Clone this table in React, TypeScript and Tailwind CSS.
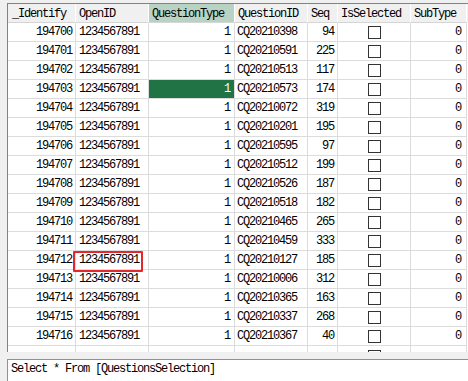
import React from 'react';

const rows: [number, string, number][] = [
    [194700, 'CQ20210398', 94],
    [194701, 'CQ20210591', 225],
    [194702, 'CQ20210513', 117],
    [194703, 'CQ20210573', 174],
    [194704, 'CQ20210072', 319],
    [194705, 'CQ20210201', 195],
    [194706, 'CQ20210595', 97],
    [194707, 'CQ20210512', 199],
    [194708, 'CQ20210526', 187],
    [194709, 'CQ20210518', 182],
    [194710, 'CQ20210465', 265],
    [194711, 'CQ20210459', 333],
    [194712, 'CQ20210127', 185],
    [194713, 'CQ20210006', 312],
    [194714, 'CQ20210365', 163],
    [194715, 'CQ20210337', 268],
    [194716, 'CQ20210367', 40],
];

const cols = 'grid grid-cols-[68px_73px_86px_73px_30px_73px_56px]';
const cell = 'flex items-center h-[19px] border-r border-b border-[#dcdcdc] overflow-hidden whitespace-nowrap';
const head = 'flex items-center h-[19px] border-r border-r-white border-b border-b-[#d5d5d5] pl-[3px] pt-[2px] whitespace-nowrap';

function CheckBox() {
    return <div className="w-[13px] h-[13px] border border-[#333333] bg-white" />;
}

export default function App() {
    return (
        <div
            className="relative w-[468px] h-[381px] bg-[#f0f0f0] flex flex-col pt-[3px] overflow-hidden text-[12px] tracking-[-1.2px] text-black"
            style={{ fontFamily: '"Liberation Mono", "DejaVu Sans Mono", monospace' }}
        >
            {/* result grid */}
            <div className="ml-[7px] h-[349px] border-t border-l border-[#828282] bg-white overflow-hidden">
                <div className={`${cols} bg-[#f0f0f0]`}>
                    <div className={`${head} pl-[4px]`}>_Identify</div>
                    <div className={head}>OpenID</div>
                    <div className={`${head} bg-[#b8d2c3]`}>QuestionType</div>
                    <div className={head}>QuestionID</div>
                    <div className={head}>Seq</div>
                    <div className={head}>IsSelected</div>
                    <div className={head}>SubType</div>
                </div>
                {rows.map(([id, qid, seq]) => (
                    <div key={id} className={cols}>
                        <div className={`${cell} justify-end pr-[3px]`}>{id}</div>
                        <div className={`${cell} pl-[3px]`}>1234567891</div>
                        <div
                            className={`${cell} justify-end pr-[4px] ${id === 194703 ? 'bg-[#217346] text-white' : ''}`}
                        >
                            1
                        </div>
                        <div className={`${cell} pl-[2px]`}>{qid}</div>
                        <div className={`${cell} justify-end pr-[3px]`}>{seq}</div>
                        <div className={`${cell} justify-center`}>
                            <CheckBox />
                        </div>
                        <div className={`${cell} justify-end pr-[5px]`}>0</div>
                    </div>
                ))}
                <div className={cols}>
                    <div className={cell} />
                    <div className={cell} />
                    <div className={cell} />
                    <div className={cell} />
                    <div className={cell} />
                    <div className={`${cell} justify-center items-start pt-[4px]`}>
                        <CheckBox />
                    </div>
                    <div className={cell} />
                </div>
            </div>

            {/* sql editor */}
            <div className="mt-[7px] ml-[7px] flex-1 bg-white border-t border-l border-[#8a968a] pl-[3px] pt-[1px] leading-[16px]">
                Select * From [QuestionsSelection]
            </div>

            {/* annotation */}
            <div className="absolute left-[73px] top-[251px] w-[70px] h-[21px] border-2 border-[#e5262b] rounded-[1px]" />
        </div>
    );
}
